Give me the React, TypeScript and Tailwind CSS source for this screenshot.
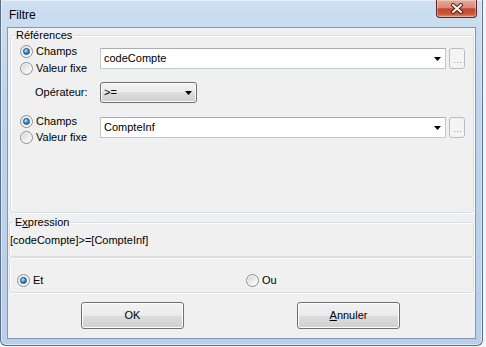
import type { ReactNode } from "react";

function Radio({ checked }: { checked?: boolean }) {
  return (
    <span className="flex h-[13px] w-[13px] shrink-0 items-center justify-center rounded-full border border-[#8e8f8f] bg-[linear-gradient(135deg,#cfcfcf,#eeeeee_55%,#ffffff)] shadow-[inset_0_0_0_1px_#f8f8f8]">
      {checked && (
        <span className="h-[7px] w-[7px] rounded-full border border-[#1b4f84] bg-[radial-gradient(circle_at_35%_30%,#c6ecff,#3f98d8_45%,#0f4c8a)]" />
      )}
    </span>
  );
}

function Option({ label, checked }: { label: ReactNode; checked?: boolean }) {
  return (
    <label className="flex items-center gap-[3px]">
      <Radio checked={checked} />
      <span>{label}</span>
    </label>
  );
}

function Arrow() {
  return (
    <svg width="7" height="4" viewBox="0 0 7 4" className="shrink-0">
      <polygon points="0,0 7,0 3.5,4" fill="#000" />
    </svg>
  );
}

function Combo({ value }: { value: string }) {
  return (
    <div className="flex h-[21px] w-[346px] items-center justify-between border border-[#c3c8ce] border-t-[#abadb3] bg-white pl-[3px] pr-[4px]">
      <span>{value}</span>
      <Arrow />
    </div>
  );
}

function Ellipsis() {
  return (
    <div className="flex h-[21px] w-[16px] items-end justify-center gap-[2px] rounded-[3px] border border-[#b9bdc1] bg-[#f4f4f4] pb-[5px]">
      <span className="h-[1px] w-[1px] bg-[#9a9a9a]" />
      <span className="h-[1px] w-[1px] bg-[#9a9a9a]" />
      <span className="h-[1px] w-[1px] bg-[#9a9a9a]" />
    </div>
  );
}

function Group({
  legend,
  className,
  children,
}: {
  legend?: ReactNode;
  className?: string;
  children?: ReactNode;
}) {
  return (
    <div
      className={`relative rounded-[3px] border border-[#d5dfe5] shadow-[inset_1px_1px_0_#ffffff,1px_1px_0_#ffffff] ${className ?? ""}`}
    >
      {legend && (
        <span className="absolute -top-[7px] left-[4px] bg-[#f0f0f0] px-[1px] leading-[13px]">
          {legend}
        </span>
      )}
      {children}
    </div>
  );
}

function Button({ children }: { children: ReactNode }) {
  return (
    <button className="h-[27px] w-[103px] rounded-[3px] border border-[#707070] bg-[linear-gradient(180deg,#f2f2f2_0%,#ebebeb_50%,#dddddd_50%,#cfcfcf_100%)] text-[11px] leading-[13px] shadow-[inset_0_0_0_1px_#fcfcfc]">
      {children}
    </button>
  );
}

function CloseButton() {
  return (
    <div className="-mr-[1px] flex h-[18px] w-[41px] items-center justify-center rounded-b-[4px] border border-t-0 border-[#5b2a22] bg-[linear-gradient(180deg,#e6aa9c_0%,#d98b76_45%,#c4462f_52%,#c75439_80%,#dc8e70_100%)] shadow-[inset_0_0_0_1px_rgba(255,255,255,0.35)]">
      <svg width="14" height="11" viewBox="0 0 14 11">
        <path d="M3 2 L11 9 M11 2 L3 9" stroke="#4a1c14" strokeWidth="4" strokeLinecap="round" />
        <path d="M3 2 L11 9 M11 2 L3 9" stroke="#f4f4f4" strokeWidth="2.2" strokeLinecap="round" />
      </svg>
    </div>
  );
}

export default function App() {
  return (
    <div className="h-[347px] w-[486px] overflow-hidden bg-[#f3f5f8] font-['Liberation_Sans',sans-serif] text-[11px] leading-[13px] text-black">
      <div className="flex h-[346px] w-[483px] flex-col rounded-b-[6px] border border-t-0 border-[#5d6f86] bg-[linear-gradient(180deg,#cddff2_0%,#bed3eb_30%,#b9cfe9_100%)] px-[6px] pb-[6px] shadow-[inset_0_0_0_1px_rgba(255,255,255,0.5)]">
        {/* title bar */}
        <div className="flex h-[27px] items-start justify-between">
          <span className="mt-[8px] pl-[2px] text-[12px] leading-[14px]">Filtre</span>
          <CloseButton />
        </div>

        {/* client area */}
        <div className="flex flex-1 flex-col border border-[#8298b4] bg-[#f0f0f0]">
          <Group legend="Références" className="ml-[2px] mr-[1px] mt-[7px] h-[178px] pt-[7px]">
            <div className="flex">
              <div className="flex w-[89px] flex-col pl-[9px]">
                <div className="flex h-[17px] items-center">
                  <Option label="Champs" checked />
                </div>
                <div className="flex h-[17px] items-center">
                  <Option label="Valeur fixe" />
                </div>
              </div>
              <div className="mt-[5px] flex gap-[3px]">
                <Combo value="codeCompte" />
                <Ellipsis />
              </div>
            </div>

            <div className="mt-[5px] flex items-center">
              <div className="w-[89px] pl-[24px]">Opérateur:</div>
              <div className="flex h-[21px] w-[97px] items-center justify-between rounded-[3px] border border-[#707070] bg-[linear-gradient(180deg,#f2f2f2_0%,#ebebeb_50%,#dddddd_50%,#cfcfcf_100%)] pl-[3px] pr-[4px] shadow-[inset_0_0_0_1px_#fcfcfc]">
                <span>&gt;=</span>
                <Arrow />
              </div>
            </div>

            <div className="mt-[10px] flex">
              <div className="flex w-[89px] flex-col pl-[9px]">
                <div className="flex h-[16px] items-center">
                  <Option label="Champs" checked />
                </div>
                <div className="flex h-[16px] items-center">
                  <Option label="Valeur fixe" />
                </div>
              </div>
              <div className="mt-[4px] flex gap-[3px]">
                <Combo value="CompteInf" />
                <Ellipsis />
              </div>
            </div>
          </Group>

          <Group
            legend={
              <>
                E<u>x</u>pression
              </>
            }
            className="ml-[1px] mr-[1px] mt-[9px] h-[35px] pt-[11px]"
          >
            <div className="pl-[0px]">[codeCompte]&gt;=[CompteInf]</div>
          </Group>

          <Group className="ml-[1px] mr-[1px] h-[36px] pt-[14px]">
            <div className="flex h-[16px] items-center pl-[7px]">
              <div className="w-[229px]">
                <Option label="Et" checked />
              </div>
              <Option label="Ou" />
            </div>
          </Group>

          <div className="mt-[9px] flex gap-[113px] pl-[73px]">
            <Button>OK</Button>
            <Button>
              <u>A</u>nnuler
            </Button>
          </div>
        </div>
      </div>
    </div>
  );
}
